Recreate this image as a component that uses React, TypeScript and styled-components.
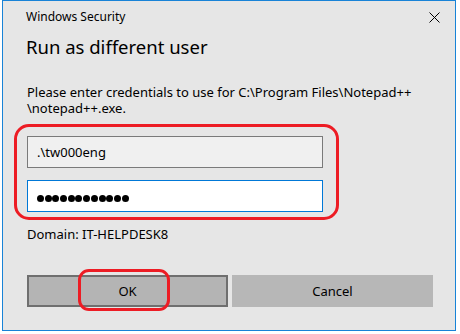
import React from "react";
import styled, { createGlobalStyle } from "styled-components";

const GlobalStyle = createGlobalStyle`
  html, body {
    margin: 0;
    padding: 0;
    background: #ffffff;
  }
  body {
    font-family: "Noto Sans", "Open Sans", sans-serif;
    color: #000000;
  }
`;

const Window = styled.div`
  position: relative;
  box-sizing: border-box;
  width: 454px;
  height: 331px;
  margin-left: 2px;
  border: 1px solid #1883d7;
  background: #e6e6e6;
  padding: 0 22px 0 24px;
`;

const TitleBar = styled.div`
  display: flex;
  justify-content: space-between;
  align-items: flex-start;
  height: 34px;
  margin: 0 -22px 0 -1px;
  padding: 8px 15px 0 0;
  box-sizing: border-box;
`;

const Caption = styled.span`
  font-size: 12px;
  line-height: 16px;
`;

const CloseButton = styled.span`
  display: flex;
  margin-top: 3px;
`;

const Heading = styled.h1`
  margin: 0 0 0 -1px;
  font-size: 18.5px;
  font-weight: 400;
  line-height: 23px;
`;

const Message = styled.p`
  margin: 26px 0 0;
  font-size: 13px;
  line-height: 16px;
  white-space: nowrap;
`;

const Field = styled.div<{ $focused?: boolean }>`
  box-sizing: border-box;
  width: 296px;
  height: 32px;
  margin-top: ${({ $focused }) => ($focused ? "12px" : "20px")};
  padding-left: 9px;
  display: flex;
  align-items: center;
  font-size: 13px;
  background: ${({ $focused }) => ($focused ? "#ffffff" : "#f0f0f0")};
  border: 1px solid ${({ $focused }) => ($focused ? "#0078d7" : "#7a7a7a")};
`;

const Dots = styled.div`
  display: flex;
  gap: 0.7px;
  margin-top: 5px;
`;

const Dot = styled.span`
  width: 7px;
  height: 7px;
  border-radius: 50%;
  background: #000000;
`;

const Domain = styled.div`
  margin-top: 14px;
  font-size: 13px;
  line-height: 16px;
`;

const ButtonRow = styled.div`
  display: grid;
  grid-template-columns: 201px 201px;
  gap: 4px;
  margin-top: 33px;
`;

const Button = styled.div<{ $default?: boolean }>`
  box-sizing: border-box;
  height: 32px;
  display: flex;
  align-items: center;
  justify-content: center;
  font-size: 13px;
  background: ${({ $default }) => ($default ? "#b4b4b4" : "#b7b7b7")};
  border: 2px solid ${({ $default }) => ($default ? "#6f6f6f" : "#b7b7b7")};
`;

// red marker rings drawn over the dialog
const Marker = styled.div<{ $radius: number }>`
  position: absolute;
  box-sizing: border-box;
  border: 3px solid #ed1c24;
  border-radius: ${({ $radius }) => $radius}px;
  pointer-events: none;
`;

export default function App() {
  return (
    <>
      <GlobalStyle />
      <Window>
        <TitleBar>
          <Caption>Windows Security</Caption>
          <CloseButton>
            <svg width="11" height="11" viewBox="0 0 11 11">
              <path d="M0.5 0.5 L10.5 10.5 M10.5 0.5 L0.5 10.5" stroke="#000" strokeWidth="1" fill="none" />
            </svg>
          </CloseButton>
        </TitleBar>
        <Heading>Run as different user</Heading>
        <Message>
          Please enter credentials to use for C:\Program Files\Notepad++
          <br />
          \notepad++.exe.
        </Message>
        <Field>.\tw000eng</Field>
        <Field $focused>
          <Dots>
            {Array.from({ length: 12 }).map((_, i) => (
              <Dot key={i} />
            ))}
          </Dots>
        </Field>
        <Domain>Domain: IT-HELPDESK8</Domain>
        <ButtonRow>
          <Button $default>OK</Button>
          <Button>Cancel</Button>
        </ButtonRow>
        <Marker $radius={15} style={{ left: 11, top: 123, width: 325, height: 96 }} />
        <Marker $radius={11} style={{ left: 75, top: 268, width: 92, height: 42 }} />
      </Window>
    </>
  );
}
